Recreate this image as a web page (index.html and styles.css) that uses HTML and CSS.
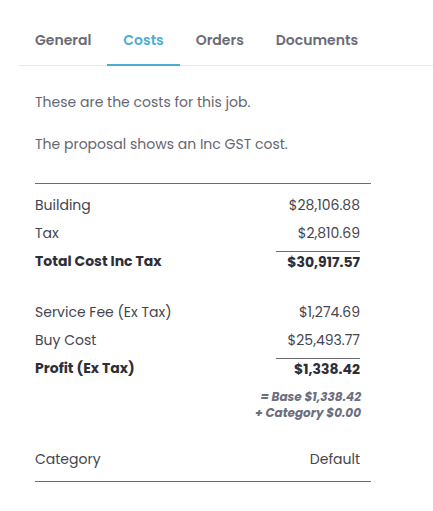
FILE: index.html
```html
<!DOCTYPE html>
<html>
<head>
<meta charset="utf-8">
<link rel="stylesheet" href="styles.css">
</head>
<body>
<div class="page">
  <nav class="tabs">
    <div class="tab">General</div>
    <div class="tab active">Costs</div>
    <div class="tab">Orders</div>
    <div class="tab">Documents</div>
  </nav>
  <div class="content">
    <p class="intro">These are the costs for this job.</p>
    <p class="intro">The proposal shows an Inc GST cost.</p>
    <div class="table">
      <div class="group">
        <div class="row"><span>Building</span><span>$28,106.88</span></div>
        <div class="row"><span>Tax</span><span>$2,810.69</span></div>
        <div class="row total"><span>Total Cost Inc Tax</span><span class="sum">$30,917.57</span></div>
      </div>
      <div class="group">
        <div class="row"><span>Service Fee (Ex Tax)</span><span>$1,274.69</span></div>
        <div class="row"><span>Buy Cost</span><span>$25,493.77</span></div>
        <div class="row total"><span>Profit (Ex Tax)</span><span class="sum">$1,338.42</span></div>
      </div>
      <div class="note">
        <div>= Base $1,338.42</div>
        <div>+ Category $0.00</div>
      </div>
      <div class="row category"><span>Category</span><span>Default</span></div>
    </div>
  </div>
</div>
</body>
</html>
```
FILE: styles.css
```css
* { box-sizing: border-box; }
body {
  margin: 0;
  background: #ffffff;
  font-family: Poppins, "Open Sans", sans-serif;
  color: #45454f;
}
.page {
  padding-left: 19px;
  padding-top: 16px;
}
.tabs {
  display: flex;
  border-bottom: 1px solid #e6e6e8;
}
.tab {
  padding: 14px 16px 14px;
  font-size: 14px;
  line-height: 20px;
  font-weight: 600;
  color: #6b6b76;
  border-bottom: 2px solid transparent;
  margin-bottom: -1px;
}
.tab.active {
  color: #4aaed0;
  border-bottom-color: #4aaed0;
}
.content {
  width: 352px;
  padding-left: 16px;
  padding-top: 25px;
}
.intro {
  margin: 0 0 20px;
  font-size: 14px;
  line-height: 22px;
  color: #666672;
}
.table {
  margin-top: 28px;
  border-top: 1px solid #6b6b75;
  padding-top: 7px;
}
.group + .group { margin-top: 26px; }
.row {
  display: flex;
  justify-content: space-between;
  padding-right: 11px;
  font-size: 14px;
  line-height: 28px;
  color: #45454f;
}
.row.total {
  margin-top: 4px;
  line-height: 20px;
  font-weight: 700;
  color: #2e2e38;
}
.sum {
  width: 84px;
  text-align: right;
  border-top: 1px solid #6b6b75;
}
.note {
  margin-top: 10px;
  padding-right: 10px;
  text-align: right;
  font-size: 12px;
  line-height: 16px;
  font-weight: 700;
  font-style: italic;
  color: #6b6e7e;
}
.category {
  margin-top: 27px;
  line-height: 22px;
  padding-bottom: 11px;
  border-bottom: 1px solid #6b6b75;
}
```
